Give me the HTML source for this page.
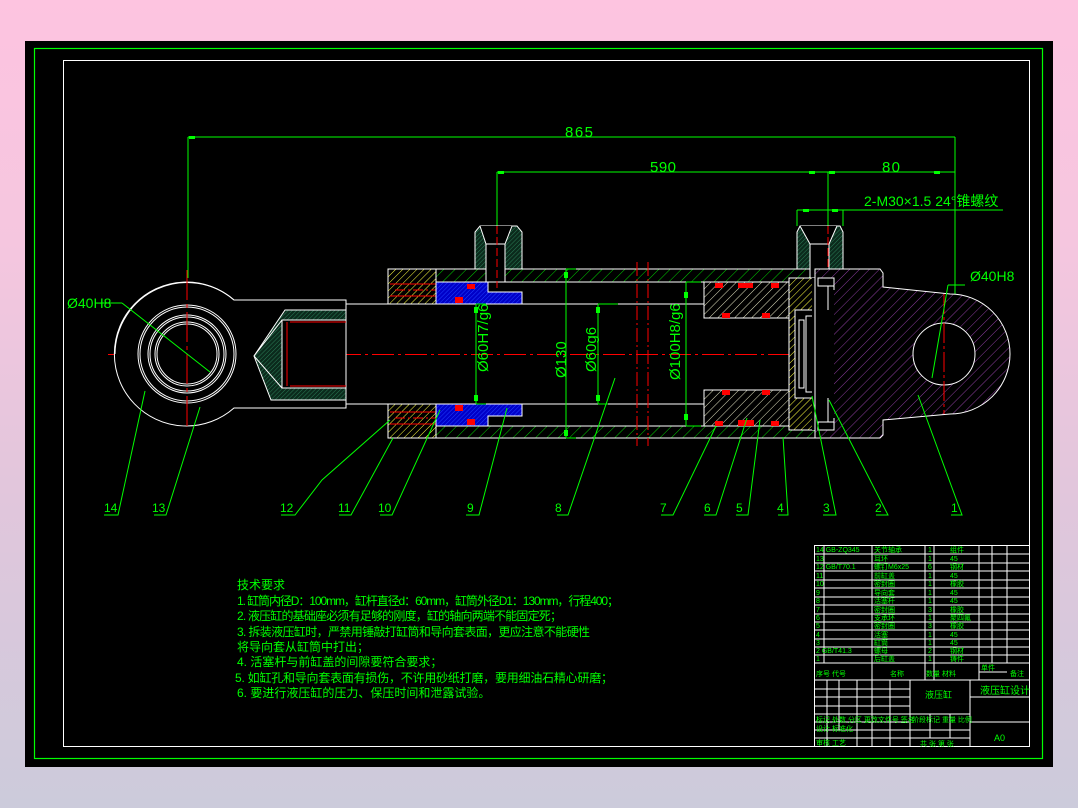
<!DOCTYPE html>
<html><head><meta charset="utf-8"><style>
html,body{margin:0;padding:0;width:1078px;height:808px;overflow:hidden;background:linear-gradient(#fdc4e0 0%,#f5c6df 30%,#e2c6dc 60%,#cccbdb 100%);}
svg{position:absolute;left:0;top:0}
text{font-family:"Liberation Sans","Noto Sans CJK SC",sans-serif;fill:#00ff00}
</style></head><body>
<svg width="1078" height="808" viewBox="0 0 1078 808">
<defs>
<pattern id="hg" width="8" height="8" patternUnits="userSpaceOnUse" patternTransform="rotate(45)"><rect width="8" height="8" fill="#000"/><line x1="0" y1="0" x2="0" y2="8" stroke="#00d000" stroke-width="1"/></pattern>
<pattern id="hy" width="5" height="5" patternUnits="userSpaceOnUse" patternTransform="rotate(45)"><rect width="5" height="5" fill="#000"/><line x1="0" y1="0" x2="0" y2="5" stroke="#ffff40" stroke-width="1"/></pattern>
<pattern id="hd" width="3" height="3" patternUnits="userSpaceOnUse" patternTransform="rotate(45)"><rect width="3" height="3" fill="#0b2a1c"/><line x1="0" y1="0" x2="0" y2="3" stroke="#2a7a55" stroke-width="1"/></pattern>
<pattern id="hb" width="3" height="3" patternUnits="userSpaceOnUse" patternTransform="rotate(45)"><rect width="3" height="3" fill="#0000c8"/><line x1="0" y1="0" x2="0" y2="3" stroke="#2040ff" stroke-width="1"/></pattern>
<pattern id="hp" width="7" height="7" patternUnits="userSpaceOnUse" patternTransform="rotate(45)"><rect width="7" height="7" fill="#000"/><line x1="0" y1="0" x2="0" y2="7" stroke="#8a3c9c" stroke-width="1"/></pattern>
<pattern id="hw" width="6" height="6" patternUnits="userSpaceOnUse" patternTransform="rotate(45)"><rect width="6" height="6" fill="#000"/><line x1="0" y1="0" x2="0" y2="6" stroke="#e0e0c0" stroke-width="1"/></pattern>
</defs>
<rect x="25" y="41" width="1028" height="726" fill="#000"/>
<rect x="34.5" y="48.5" width="1008" height="710" fill="none" stroke="#00ff00" stroke-width="1.2"/>
<rect x="63.5" y="60.5" width="966" height="686" fill="none" stroke="#fff" stroke-width="1"/>

<!-- dimensions -->
<g stroke="#00ff00" stroke-width="1" fill="none">
<path d="M188 137H955M497 172H955M188 137V278M497 172V232M828 172V290M955 137V300M797 210H1003M797 210V226M843 210V226"/>
</g>
<g fill="#00ff00"><rect x="189" y="136" width="6" height="3"/><rect x="498" y="171" width="6" height="3"/><rect x="809" y="171" width="6" height="3"/><rect x="829" y="171" width="6" height="3"/><rect x="934" y="171" width="6" height="3"/><rect x="803" y="209" width="6" height="3"/><rect x="832" y="209" width="6" height="3"/></g>
<text x="565" y="137" font-size="15" textLength="28">865</text>
<text x="650" y="172" font-size="15" textLength="26">590</text>
<text x="882" y="172" font-size="15" textLength="18">80</text>
<text x="864" y="206" font-size="14">2-M30×1.5 24°锥螺纹</text>

<!-- centerline -->
<path d="M108 354.5H1005" stroke="#ff0000" stroke-width="1" stroke-dasharray="22 4 3 4"/>

<!-- barrel -->
<rect x="400" y="269" width="467" height="13" fill="url(#hg)" stroke="#fff"/>
<rect x="400" y="426" width="467" height="12" fill="url(#hg)" stroke="#fff"/>
<!-- end cap yellow -->
<rect x="388" y="269" width="48" height="35" fill="url(#hy)" stroke="#fff"/>
<rect x="388" y="404" width="48" height="34" fill="url(#hy)" stroke="#fff"/>
<path d="M390 284h60M390 296h60M390 412h60M390 424h60" stroke="#ff0000"/>
<path d="M395 290h65M395 418h65" stroke="#ff0000" stroke-dasharray="10 3 2 3"/>
<!-- guide sleeve blue -->
<path d="M436 282H488V292H522V304H436Z" fill="url(#hb)" stroke="#fff"/>
<path d="M436 404H522V416H488V426H436Z" fill="url(#hb)" stroke="#fff"/>
<rect x="467" y="284" width="8" height="5" fill="#f00"/><rect x="455" y="297" width="8" height="6" fill="#f00"/>
<rect x="455" y="405" width="8" height="6" fill="#f00"/><rect x="467" y="419" width="8" height="6" fill="#f00"/>
<!-- left port -->
<path d="M475 269V232L480 226H517L522 232V269Z" fill="url(#hd)" stroke="#fff"/>
<path d="M486 244V282H505V244Z M480 226L486 244H505L512 226" fill="#000" stroke="#fff"/>
<path d="M497 226V288" stroke="#f00" stroke-dasharray="8 3"/>
<!-- right port -->
<path d="M797 269V232L800 226H840L843 232V269Z" fill="url(#hd)" stroke="#fff"/>
<path d="M810 244V282H829V244Z M800 226L810 244H829L837 226" fill="#000" stroke="#fff"/>
<path d="M828 226V310" stroke="#f00" stroke-dasharray="8 3"/>
<!-- rod -->
<path d="M346 304H704M346 404H704" stroke="#fff"/>
<!-- break lines -->
<path d="M637 262V446M648 262V446" stroke="#f00" stroke-dasharray="14 3 2 3"/>
<!-- piston -->
<rect x="704" y="282" width="85" height="36" fill="url(#hw)" stroke="#fff"/>
<rect x="704" y="390" width="85" height="36" fill="url(#hw)" stroke="#fff"/>
<g fill="#f00"><rect x="715" y="283" width="8" height="5"/><rect x="738" y="283" width="15" height="5"/><rect x="771" y="283" width="8" height="5"/><rect x="722" y="313" width="8" height="5"/><rect x="762" y="313" width="8" height="5"/><rect x="722" y="390" width="8" height="5"/><rect x="762" y="390" width="8" height="5"/><rect x="715" y="421" width="8" height="5"/><rect x="738" y="420" width="16" height="6"/><rect x="771" y="421" width="8" height="5"/></g>
<rect x="789" y="278" width="26" height="152" fill="url(#hy)" stroke="#fff"/>
<rect x="795" y="310" width="41" height="88" fill="#000" stroke="#fff"/>
<path d="M806 316h15v76h-15zM821 318h6v72h-6zM799 320h5v68h-5zM829 330h4v48h-4z" fill="none" stroke="#fff"/>
<!-- rear cap -->
<path d="M815 269H880L883 273V287L950 294A60 60 0 0 1 950 414L883 420V435L880 438H815Z" fill="url(#hp)" stroke="#fff"/>
<rect x="812" y="278" width="22" height="152" fill="#000" stroke="none"/>
<path d="M815 278V430M834 278V290M834 418V430" stroke="#fff"/>
<rect x="818" y="278" width="16" height="8" fill="#000" stroke="#fff"/><rect x="818" y="422" width="16" height="8" fill="#000" stroke="#fff"/>
<path d="M828 286V310M828 398V422" stroke="#fff"/>
<circle cx="944" cy="354" r="31" fill="#000" stroke="#fff"/>
<path d="M944 294V414" stroke="#f00" stroke-dasharray="20 3 3 3"/>
<path d="M948 285L932 378" stroke="#00ff00"/><path d="M948 285H965" stroke="#00ff00"/>
<text x="970" y="281" font-size="14">Ø40H8</text>

<!-- left eye -->
<path d="M234 300A72 72 0 1 0 234 408H346V300Z" fill="#000" stroke="#fff"/>
<path d="M234 300A72 72 0 0 0 115 354" fill="none" stroke="#fff"/>
<g fill="none" stroke="#fff"><circle cx="187" cy="354" r="49"/><circle cx="187" cy="354" r="47"/><circle cx="187" cy="354" r="39"/><circle cx="187" cy="354" r="37"/><circle cx="187" cy="354" r="32"/><circle cx="187" cy="354" r="30"/></g>
<path d="M187 270V430" stroke="#f00" stroke-dasharray="30 4 4 4"/>
<path d="M285 310H346V400H271L254 356Z" fill="url(#hd)" stroke="#fff"/>
<rect x="282" y="320" width="64" height="68" fill="#000" stroke="#fff"/>
<path d="M287 322V386M290 322H346M290 386H346" stroke="#f00"/>
<path d="M254 356L282 320M254 356L282 388" stroke="#fff"/>
<path d="M122 303L210 372M100 303H122" stroke="#00ff00"/>
<text x="67" y="308" font-size="14">Ø40H8</text>

<!-- dimension verticals -->
<g stroke="#00ff00" fill="none"><path d="M476 304V404M476 304h10M476 404h10M566 269V438M566 269h10M566 438h10M598 304V404M598 304h20M598 404h10M686 282V426M686 282h15M686 426h15"/></g>
<g fill="#00ff00"><rect x="474" y="307" width="4" height="6"/><rect x="474" y="395" width="4" height="6"/><rect x="564" y="272" width="4" height="6"/><rect x="564" y="430" width="4" height="6"/><rect x="596" y="307" width="4" height="6"/><rect x="596" y="395" width="4" height="6"/><rect x="684" y="292" width="4" height="6"/><rect x="684" y="414" width="4" height="6"/></g>
<g font-size="15">
<text transform="translate(488,372) rotate(-90)">Ø60H7/g6</text>
<text transform="translate(566,378) rotate(-90)">Ø130</text>
<text transform="translate(596,372) rotate(-90)">Ø60g6</text>
<text transform="translate(680,380) rotate(-90)">Ø100H8/g6</text>
</g>

<!-- leaders -->
<g stroke="#00ff00" fill="none">
<path d="M104 515H118L145 391M154 515H166L200 407M281 515H295L322 480L390 420M339 515H351L393 438M380 515H392L440 410M466 515H479L507 408M557 515H568L615 378M661 515H673L716 426M704 515H716L747 418M736 515H748L760 420M778 515H788L783 437M823 515H836L812 396M876 515H888L829 400M951 515H962L918 395"/>
</g>
<g font-size="12">
<text x="104" y="512">14</text><text x="152" y="512">13</text><text x="280" y="512">12</text><text x="338" y="512">11</text><text x="378" y="512">10</text><text x="467" y="512">9</text><text x="555" y="512">8</text><text x="660" y="512">7</text><text x="704" y="512">6</text><text x="736" y="512">5</text><text x="777" y="512">4</text><text x="823" y="512">3</text><text x="875" y="512">2</text><text x="951" y="512">1</text>
</g>

<!-- tech requirements -->
<g font-size="12">
<text x="237" y="589">技术要求</text>
<text x="237" y="605" textLength="382">1. 缸筒内径D：100mm，缸杆直径d：60mm，缸筒外径D1：130mm，行程400；</text>
<text x="237" y="620" textLength="325">2. 液压缸的基础座必须有足够的刚度，缸的轴向两端不能固定死；</text>
<text x="237" y="636" textLength="353">3. 拆装液压缸时，严禁用锤敲打缸筒和导向套表面，更应注意不能硬性</text>
<text x="237" y="651">将导向套从缸筒中打出；</text>
<text x="237" y="666">4. 活塞杆与前缸盖的间隙要符合要求；</text>
<text x="235" y="682" textLength="378">5. 如缸孔和导向套表面有损伤，不许用砂纸打磨，要用细油石精心研磨；</text>
<text x="237" y="697">6. 要进行液压缸的压力、保压时间和泄露试验。</text>
</g>

<!-- title block -->
<g stroke="#fff" fill="none" stroke-width="1">
<rect x="814.5" y="545.5" width="215" height="201"/>
<path d="M814 554H1030M814 563H1030M814 571H1030M814 580H1030M814 588H1030M814 597H1030M814 605H1030M814 614H1030M814 622H1030M814 630H1030M814 639H1030M814 647H1030M814 655H1030M814 663H1030M814 680H1030"/>
<path d="M824 545V663M872 545V697M925 545V680M934 545V680M979 545V680M992 545V663M1007 545V663M979 672H1007"/>
<path d="M814 689H910M814 697H910M814 706H910M814 714H910M814 722H910M814 730H910M814 738H910"/>
<path d="M827 680V746M839 680V730M857 680V746M872 680V746M890 680V746M910 680V746M970 680V746M910 714H970M910 730H970M910 738H970M970 697H1030M970 722H1030M930 714V738M950 714V738"/>
</g>
<g font-size="7" fill="#00ff00">
<text x="816" y="552">14 GB-ZQ345</text><text x="874" y="552">关节轴承</text><text x="928" y="552">1</text><text x="950" y="552">组件</text>
<text x="816" y="561">13</text><text x="874" y="561">耳环</text><text x="928" y="561">1</text><text x="950" y="561">45</text>
<text x="816" y="569">12 GB/T70.1</text><text x="874" y="569">螺钉M6x25</text><text x="928" y="569">6</text><text x="950" y="569">钢材</text>
<text x="816" y="578">11</text><text x="874" y="578">前缸盖</text><text x="928" y="578">1</text><text x="950" y="578">45</text>
<text x="816" y="586">10</text><text x="874" y="586">密封圈</text><text x="928" y="586">1</text><text x="950" y="586">橡胶</text>
<text x="816" y="595">9</text><text x="874" y="595">导向套</text><text x="928" y="595">1</text><text x="950" y="595">45</text>
<text x="816" y="603">8</text><text x="874" y="603">活塞杆</text><text x="928" y="603">1</text><text x="950" y="603">45</text>
<text x="816" y="612">7</text><text x="874" y="612">密封圈</text><text x="928" y="612">3</text><text x="950" y="612">橡胶</text>
<text x="816" y="620">6</text><text x="874" y="620">支承环</text><text x="928" y="620">1</text><text x="950" y="620">聚四氟</text>
<text x="816" y="628">5</text><text x="874" y="628">密封圈</text><text x="928" y="628">3</text><text x="950" y="628">橡胶</text>
<text x="816" y="637">4</text><text x="874" y="637">活塞</text><text x="928" y="637">1</text><text x="950" y="637">45</text>
<text x="816" y="645">3</text><text x="874" y="645">缸筒</text><text x="928" y="645">1</text><text x="950" y="645">45</text>
<text x="816" y="653">2 GB/T41.3</text><text x="874" y="653">螺母</text><text x="928" y="653">2</text><text x="950" y="653">钢材</text>
<text x="816" y="661">1</text><text x="874" y="661">后缸盖</text><text x="928" y="661">1</text><text x="950" y="661">铸件</text>
<text x="816" y="676">序号 代号</text><text x="890" y="676">名称</text><text x="926" y="676">数量 材料</text><text x="981" y="670">单件</text><text x="1010" y="676">备注</text>
<text x="925" y="698" font-size="9">液压缸</text>
<text x="980" y="694" font-size="10">液压缸设计</text>
<text x="816" y="722">标记 处数 分区 更改文件号 签名</text>
<text x="816" y="731">设计 标准化</text><text x="912" y="722">阶段标记 重量 比例</text>
<text x="816" y="745">审核 工艺</text><text x="920" y="746">共 张 第 张</text>
<text x="994" y="741" font-size="9">A0</text>
</g>
</svg>
</body></html>
